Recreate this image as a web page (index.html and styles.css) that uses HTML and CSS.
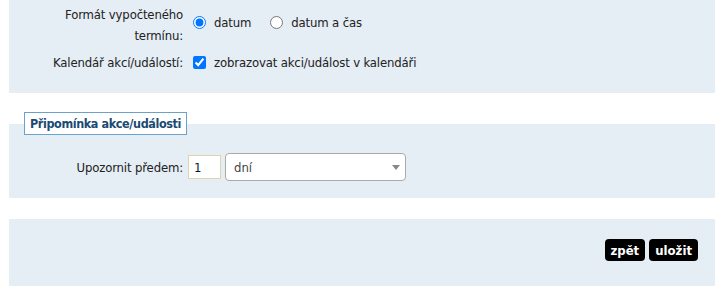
FILE: index.html
```html
<!DOCTYPE html>
<html lang="cs">
<head>
  <meta charset="UTF-8" />
  <meta name="viewport" content="width=device-width, initial-scale=1.0" />
  <title>Akce/událost</title>
  <link rel="stylesheet" href="styles.css">
</head>
<body>

  <div class="panel panel-main">
    <div class="form-row">
      <label class="form-label">Formát vypočteného termínu:</label>
      <div class="form-field raised">
        <label class="choice"><input type="radio" name="format" checked> datum</label>
        <label class="choice"><input type="radio" name="format"> datum a čas</label>
      </div>
    </div>
    <div class="form-row">
      <label class="form-label">Kalendář akcí/událostí:</label>
      <div class="form-field">
        <label class="choice"><input type="checkbox" checked> zobrazovat akci/událost v kalendáři</label>
      </div>
    </div>
  </div>

  <div class="panel panel-reminder">
    <div class="legend">Připomínka akce/události</div>
    <div class="form-row">
      <label class="form-label">Upozornit předem:</label>
      <div class="form-field">
        <input type="text" class="num-input" value="1">
        <span class="select-wrap">
          <select class="unit-select">
            <option>dní</option>
            <option>hodin</option>
            <option>minut</option>
          </select>
        </span>
      </div>
    </div>
  </div>

  <div class="panel panel-buttons">
    <button class="btn">zpět</button>
    <button class="btn">uložit</button>
  </div>

</body>
</html>
```

FILE: styles.css
```css
body {
  margin: 0;
  font-family: "DejaVu Sans Condensed", "DejaVu Sans", sans-serif;
  font-size: 13px;
  letter-spacing: -0.15px;
  color: #222;
  background: #fff;
}

.panel {
  margin: 0 7px 0 9px;
  background-color: #e5edf5;
}

.panel-main {
  padding: 4px 0 20px;
  display: flex;
  flex-direction: column;
  gap: 6px;
}

.form-row {
  display: grid;
  grid-template-columns: 150px 1fr;
  column-gap: 5px;
  align-items: center;
  align-self: stretch;
  padding-left: 24px;
  line-height: 21px;
}

.form-label {
  text-align: right;
}

.form-field {
  display: flex;
  align-items: center;
  gap: 14px;
}

/* radios sit a little above the middle of the two-line label */
.form-field.raised {
  margin-bottom: 6px;
}

.choice {
  display: flex;
  align-items: center;
  gap: 5px;
}

.choice input {
  margin: 0 3px 0 5px;
  width: 13px;
  height: 13px;
}

/* reminder block with legend sitting on the top edge */
.panel-reminder {
  margin-top: 31px;
  padding-bottom: 17px;
  display: flex;
  flex-direction: column;
  align-items: flex-start;
}

.legend {
  margin: -12px 0 0 15px;
  padding: 0 5px;
  height: 21px;
  line-height: 21px;
  background: #fff;
  border: 1px solid #6aa2cc;
  color: #1a4a72;
  font-size: 12.5px;
  font-weight: bold;
  letter-spacing: -0.4px;
}

.panel-reminder .form-row {
  margin-top: 18px;
}

.panel-reminder .form-field {
  gap: 4px;
}

.num-input {
  box-sizing: border-box;
  width: 33px;
  height: 24px;
  margin: 0;
  padding: 0 5px;
  border: 1px solid #ddd5b0;
  font: inherit;
  color: #0a1a3a;
}

.select-wrap {
  position: relative;
  display: inline-block;
  height: 28px;
}

.unit-select {
  appearance: none;
  -webkit-appearance: none;
  box-sizing: border-box;
  width: 181px;
  height: 28px;
  padding: 0 20px 0 8px;
  border: 1px solid #aaa;
  border-radius: 4px;
  background: #fff;
  font: inherit;
  color: #444;
}

.select-wrap::after {
  content: "";
  position: absolute;
  right: 6px;
  top: 12px;
  border-style: solid;
  border-width: 5px 4px 0 4px;
  border-color: #888 transparent transparent transparent;
  pointer-events: none;
}

.panel-buttons {
  margin-top: 21px;
  padding: 20px 17px 25px;
  display: flex;
  justify-content: flex-end;
  gap: 4px;
}

.btn {
  height: 22px;
  padding: 0 6px;
  border: none;
  border-radius: 4px;
  background: #000;
  color: #fff;
  font: inherit;
  font-weight: bold;
  cursor: pointer;
}
```
